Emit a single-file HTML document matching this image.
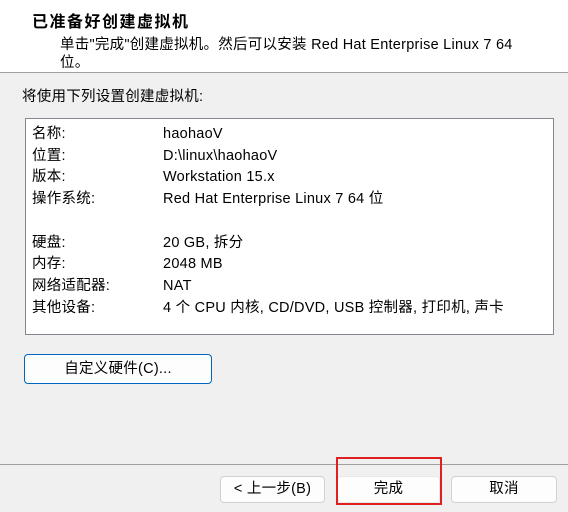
<!DOCTYPE html>
<html><head><meta charset="utf-8"><style>
body{margin:0;width:568px;height:512px;background:#f0f0f0;font-family:"Liberation Sans","Microsoft YaHei","Noto Sans CJK SC",sans-serif;font-size:14.5px;letter-spacing:0.25px;color:#000;position:relative;overflow:hidden}
.a{position:absolute;white-space:nowrap}
#hdr{position:absolute;left:0;top:0;width:568px;height:72px;background:#fff;border-bottom:1px solid #a0a0a0}
#box{position:absolute;left:25px;top:118px;width:527px;height:215px;background:#fff;border:1px solid #828790}
.btn{position:absolute;background:#fdfdfd;border:1px solid #d0d0d0;border-radius:4px;text-align:center;line-height:24px;font-size:14.5px}
</style></head><body>
<div id="hdr">
<div class="a" style="left:32px;top:8px;font-weight:bold;font-size:16px;letter-spacing:1.5px">已准备好创建虚拟机</div>
<div class="a" style="left:60px;top:33px">单击"完成"创建虚拟机。然后可以安装 Red Hat Enterprise Linux 7 64</div>
<div class="a" style="left:60px;top:51px">位。</div>
</div>
<div class="a" style="left:22px;top:85px">将使用下列设置创建虚拟机:</div>
<div id="box"></div>
<div class="a" style="left:32px;top:124px;line-height:21.7px">名称:<br>位置:<br>版本:<br>操作系统:<br><br>硬盘:<br>内存:<br>网络适配器:<br>其他设备:</div>
<div class="a" style="left:163px;top:124px;line-height:21.7px">haohaoV<br>D:\linux\haohaoV<br>Workstation 15.x<br>Red Hat Enterprise Linux 7 64 位<br><br>20 GB, 拆分<br>2048 MB<br>NAT<br>4 个 CPU 内核, CD/DVD, USB 控制器, 打印机, 声卡</div>
<div class="btn" style="left:24px;top:354px;width:186px;height:28px;line-height:28px;border-color:#0067c0">自定义硬件(C)...</div>
<div style="position:absolute;left:0;top:464px;width:568px;height:1px;background:#a0a0a0"></div>
<div class="btn" style="left:220px;top:476px;width:103px;height:25px">&lt; 上一步(B)</div>
<div class="btn" style="left:337px;top:476px;width:101px;height:25px;border-color:#e8e8e8">完成</div>
<div class="btn" style="left:451px;top:476px;width:104px;height:25px">取消</div>
<div style="position:absolute;left:336px;top:457px;width:102px;height:44px;border:2px solid #e02020"></div>
</body></html>
